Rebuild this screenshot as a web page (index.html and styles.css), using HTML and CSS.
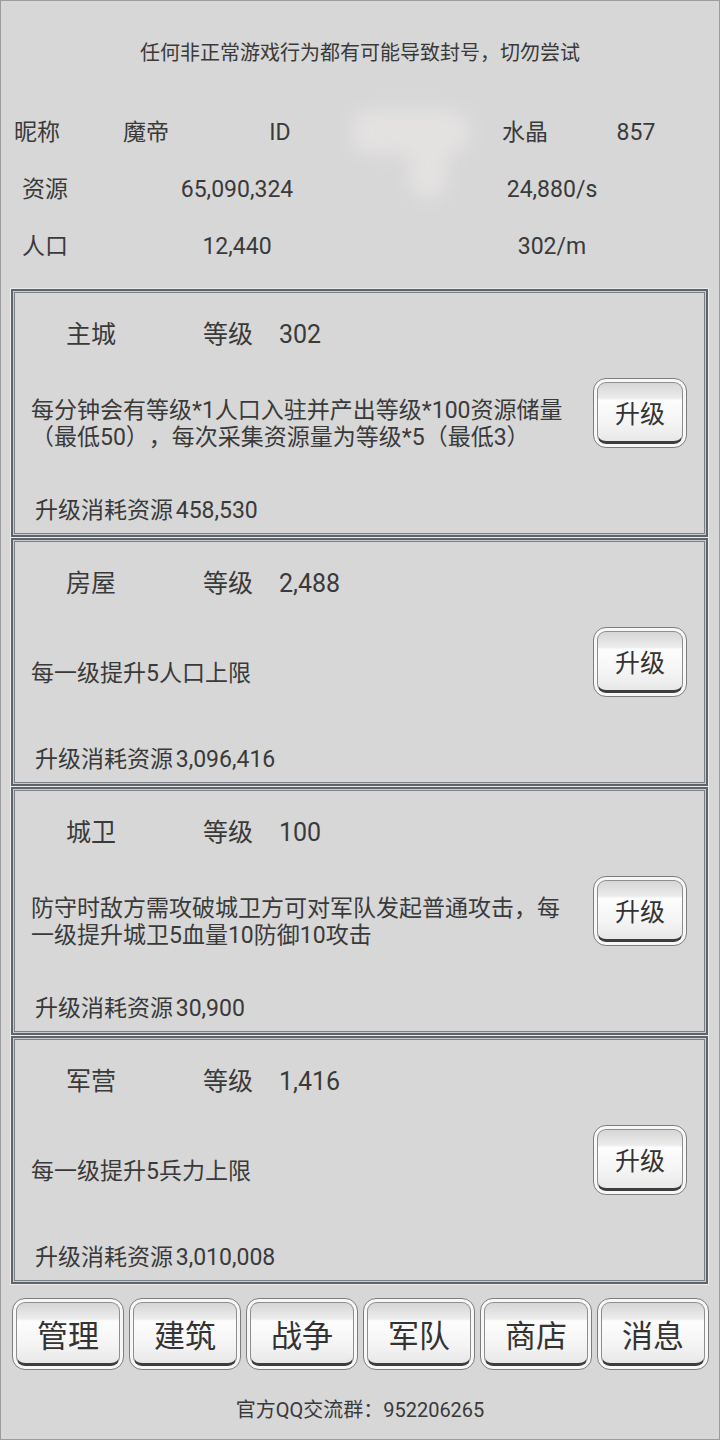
FILE: index.html
```html
<!DOCTYPE html>
<html>
<head>
    <meta name="viewport" content="width=device-width, initial-scale=1">
    <link rel="stylesheet" href="styles.css">
</head>
<body>
<div class="page">

    <div class="notice">任何非正常游戏行为都有可能导致封号，切勿尝试</div>

    <div class="info">
        <div class="row">
            <span class="c1">昵称</span>
            <span class="c2">魔帝</span>
            <span class="c3">ID</span>
            <span class="c4"></span>
            <span class="c5">水晶</span>
            <span class="c6">857</span>
        </div>
        <div class="row">
            <span class="lbl">资源</span>
            <span class="val">65,090,324</span>
            <span class="gap"></span>
            <span class="rate">24,880/s</span>
        </div>
        <div class="row">
            <span class="lbl">人口</span>
            <span class="val">12,440</span>
            <span class="gap"></span>
            <span class="rate">302/m</span>
        </div>
        <!-- hidden id -->
        <div class="mask"><i class="m1"></i><i class="m2"></i></div>
    </div>

    <div class="cards">
        <div class="card">
            <div class="card-head"><span class="name">主城</span><span class="lv">等级</span><span class="num">302</span></div>
            <div class="card-body">
                <p class="desc">每分钟会有等级*1人口入驻并产出等级*100资源储量<br>（最低50），每次采集资源量为等级*5（最低3）</p>
                <button class="btn up"><span class="face">升级</span></button>
            </div>
            <div class="cost">升级消耗资源 458,530</div>
        </div>
        <div class="card">
            <div class="card-head"><span class="name">房屋</span><span class="lv">等级</span><span class="num">2,488</span></div>
            <div class="card-body">
                <p class="desc">每一级提升5人口上限</p>
                <button class="btn up"><span class="face">升级</span></button>
            </div>
            <div class="cost">升级消耗资源 3,096,416</div>
        </div>
        <div class="card">
            <div class="card-head"><span class="name">城卫</span><span class="lv">等级</span><span class="num">100</span></div>
            <div class="card-body">
                <p class="desc">防守时敌方需攻破城卫方可对军队发起普通攻击，每<br>一级提升城卫5血量10防御10攻击</p>
                <button class="btn up"><span class="face">升级</span></button>
            </div>
            <div class="cost">升级消耗资源 30,900</div>
        </div>
        <div class="card">
            <div class="card-head"><span class="name">军营</span><span class="lv">等级</span><span class="num">1,416</span></div>
            <div class="card-body">
                <p class="desc">每一级提升5兵力上限</p>
                <button class="btn up"><span class="face">升级</span></button>
            </div>
            <div class="cost">升级消耗资源 3,010,008</div>
        </div>
    </div>

    <div class="nav">
        <button class="btn tab"><span class="face">管理</span></button>
        <button class="btn tab"><span class="face">建筑</span></button>
        <button class="btn tab"><span class="face">战争</span></button>
        <button class="btn tab"><span class="face">军队</span></button>
        <button class="btn tab"><span class="face">商店</span></button>
        <button class="btn tab"><span class="face">消息</span></button>
    </div>

    <div class="footer">官方QQ交流群：952206265</div>
</div>
</body>
</html>
```

FILE: styles.css
```css
* {box-sizing: border-box}
body {margin: 0; font-family: Roboto, "Noto Sans CJK SC", sans-serif; color: #3a3a3a; text-spacing-trim: space-all;}

.page {
    height: 1440px;
    border: 1px solid #9c9c9c;
    background-color: #d7d7d7;
    overflow: hidden;
}

/* top warning */
.notice {
    height: 101px;
    display: flex;
    align-items: center;
    justify-content: center;
    font-size: 20px;
}

/* player info */
.info {
    position: relative;
}
.row {
    display: flex;
    align-items: baseline;
    height: 57px;
    padding-top: 11px;
    font-size: 23px;
    padding-left: 13px;
}
.row span {
    text-align: center;
}
.row .c1 {width: 80px; text-align: left;}
.row .c2 {width: 104px;}
.row .c3 {width: 164px;}
.row .c4 {width: 108px;}
.row .c5 {width: 110px;}
.row .c6 {width: 112px;}

.row .lbl {width: 108px; text-align: left; padding-left: 8px;}
.row .val {width: 230px;}
.row .gap {width: 100px;}
.row .rate {width: 200px;}

.mask {
    position: absolute;
    top: 0;
    left: 0;
    filter: blur(9px);
    opacity: 0.8;
}
.mask i {
    position: absolute;
    background-color: #e8e4e4;
    border-radius: 18px;
}
.mask .m1 {left: 350px; top: 8px; width: 118px; height: 44px;}
.mask .m2 {left: 408px; top: 36px; width: 38px; height: 60px;}

/* building cards */
.cards {
    margin: 16px 11px 0 10px;
    display: flex;
    flex-direction: column;
    gap: 1px;
}
.card {
    height: 248px;
    border: 2px solid #5f636a;
    box-shadow: 0 0 0 1px #ececec, inset 0 0 0 1px #c9cbce, inset 0 0 0 2px #7b7f86;
    display: flex;
    flex-direction: column;
}
.card-head {
    height: 86px;
    display: flex;
    align-items: baseline;
    padding-top: 23px;
    padding-left: 53px;
    font-size: 25px;
}
.card-head .name {width: 137px;}
.card-head .lv {width: 76px;}

.card-body {
    height: 94px;
    display: flex;
    align-items: center;
    justify-content: space-between;
    padding: 0 19px 0 18px;
}
.desc {
    margin: 0;
    font-size: 23px;
    line-height: 27px;
}
.cost {
    margin-top: 25px;
    line-height: 30px;
    font-size: 23px;
    padding-left: 22px;
    word-spacing: -3px;
}

/* glossy buttons */
.btn {
    padding: 3px;
    border: 1.5px solid #7d7d7d;
    border-radius: 13px;
    background-color: #f7f7f7;
    font-family: Roboto, "Noto Sans CJK SC", sans-serif;
    color: #333;
    cursor: pointer;
    flex-shrink: 0;
}
.btn .face {
    display: flex;
    align-items: center;
    justify-content: center;
    height: 100%;
    border: 1px solid #8e8e8e;
    border-bottom: 3px solid #3d3d3d;
    border-radius: 9px;
    background: linear-gradient(to bottom, #d6d6d6 0%, #ececec 26%, #fdfdfd 30%, #f4f4f4 70%, #e8e8e8 100%);
}
.btn.up {
    width: 94px;
    height: 70px;
    margin-bottom: 23px;
    font-size: 25px;
}
.btn.tab {
    width: 112px;
    height: 72px;
    font-size: 31px;
}

/* bottom menu */
.nav {
    display: flex;
    gap: 5px;
    padding-left: 11px;
    margin-top: 14px;
}

.footer {
    margin-top: 28px;
    line-height: 24px;
    text-align: center;
    font-size: 20px;
}
```
